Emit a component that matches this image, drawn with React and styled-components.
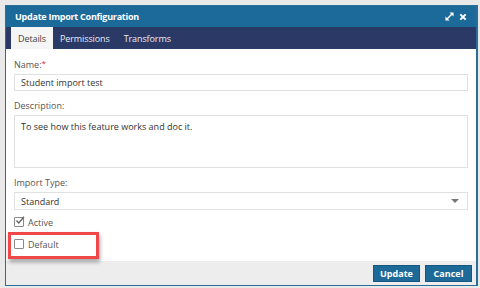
import React from 'react'
import styled, { createGlobalStyle } from 'styled-components'

const GlobalStyle = createGlobalStyle`
  html, body {
    margin: 0;
    padding: 0;
    background: #e9e9e9;
    font-family: 'Open Sans', 'Noto Sans', sans-serif;
  }
`

const Page = styled.div`
  width: 480px;
  height: 288px;
  box-sizing: border-box;
  padding: 5px 2px 2px 5px;
`

const Dialog = styled.section`
  height: 100%;
  box-sizing: border-box;
  border: 1px solid #2a6d99;
  border-right-width: 2px;
  display: flex;
  flex-direction: column;
  background: #fff;
`

const TitleBar = styled.header`
  height: 21px;
  background: #1c6a9a;
  color: #fff;
  display: flex;
  align-items: center;
  justify-content: space-between;
  padding: 0 9px 0 9px;
  font-size: 9px;
  font-weight: 700;
  letter-spacing: -0.25px;
`

const TitleIcons = styled.div`
  display: flex;
  gap: 5px;
  align-items: center;
`

const TabBar = styled.nav`
  height: 22px;
  background: #2b3966;
  display: flex;
  padding-left: 5px;
`

const Tab = styled.div`
  display: flex;
  align-items: center;
  padding: 0 7px;
  font-size: 9px;
  letter-spacing: -0.1px;
  color: ${p => (p.$active ? '#444' : '#e8ecf5')};
  background: ${p => (p.$active ? '#f5f5f5' : 'transparent')};
`

const Body = styled.div`
  flex: 1;
  padding: 1px 8px 0 8px;
  display: flex;
  flex-direction: column;
  position: relative;
`

const Label = styled.div`
  font-size: 9px;
  color: #555;
  margin: 8px 0 2px;
  line-height: 14px;
`

const Req = styled.sup`
  color: #e0201c;
  font-size: 8px;
  vertical-align: top;
  line-height: 10px;
`

const Field = styled.div`
  border: 1px solid #e0e0e0;
  height: ${p => p.$h || 17}px;
  box-sizing: border-box;
  padding: ${p => (p.$multi ? '4px 6px' : '0 6px')};
  display: flex;
  align-items: ${p => (p.$multi ? 'flex-start' : 'center')};
  justify-content: space-between;
  font-size: 9px;
  color: #333;
`

const Caret = styled.span`
  width: 0;
  height: 0;
  border-left: 4px solid transparent;
  border-right: 4px solid transparent;
  border-top: 4px solid #777;
  margin-right: 2px;
`

const CheckRow = styled.label`
  display: flex;
  align-items: center;
  gap: 4px;
  font-size: 9px;
  color: #555;
  height: 14px;
  margin-top: ${p => p.$mt || 0}px;
`

const Box = styled.span`
  width: 8px;
  height: 8px;
  border: 1px solid #8a8a8a;
  border-radius: 1px;
  position: relative;
  background: #fff;
`

const Highlight = styled.div`
  position: absolute;
  left: 2px;
  top: 183px;
  width: 91px;
  height: 27px;
  box-sizing: border-box;
  border: 3px solid #f04848;
  box-shadow: 1px 3px 4px rgba(0, 0, 0, 0.35);
`

const Footer = styled.footer`
  height: 24px;
  background: #ededed;
  display: flex;
  justify-content: flex-end;
  align-items: center;
  gap: 5px;
  padding-right: 4px;
`

const Button = styled.button`
  height: 17px;
  min-width: 47px;
  padding: 0;
  border: 1px solid #14567f;
  background: #1d6a99;
  color: #fff;
  font-family: inherit;
  font-size: 9px;
  font-weight: 700;
  cursor: pointer;
`

const ExpandIcon = () => (
  <svg width="9" height="9" viewBox="0 0 10 10">
    <path d="M1.5 8.5 L8.5 1.5" stroke="#fff" strokeWidth="1.5" />
    <path d="M5 0.5 H9.5 V5 Z" fill="#fff" />
    <path d="M0.5 5 V9.5 H5 Z" fill="#fff" />
  </svg>
)

const CloseIcon = () => (
  <svg width="8" height="8" viewBox="0 0 9 9">
    <path d="M1.5 1.5 L7.5 7.5 M7.5 1.5 L1.5 7.5" stroke="#fff" strokeWidth="2.2" />
  </svg>
)

const CheckMark = () => (
  <svg
    width="10"
    height="9"
    viewBox="0 0 10 9"
    style={{ position: 'absolute', left: 0, top: -2 }}
  >
    <path d="M1.5 4.5 L3.8 7 L9 0.8" stroke="#666" strokeWidth="1.4" fill="none" />
  </svg>
)

export default function App() {
  return (
    <Page>
      <GlobalStyle />
      <Dialog>
        <TitleBar>
          <span>Update Import Configuration</span>
          <TitleIcons>
            <ExpandIcon />
            <CloseIcon />
          </TitleIcons>
        </TitleBar>
        <TabBar>
          <Tab $active>Details</Tab>
          <Tab>Permissions</Tab>
          <Tab>Transforms</Tab>
        </TabBar>
        <Body>
          <Label>
            Name:<Req>*</Req>
          </Label>
          <Field>Student import test</Field>
          <Label>Description:</Label>
          <Field $multi $h={53}>
            To see how this feature works and doc it.
          </Field>
          <Label>Import Type:</Label>
          <Field $h={18}>
            Standard
            <Caret />
          </Field>
          <CheckRow $mt={5}>
            <Box>
              <CheckMark />
            </Box>
            Active
          </CheckRow>
          <CheckRow $mt={8}>
            <Box />
            Default
          </CheckRow>
          <Highlight />
        </Body>
        <Footer>
          <Button>Update</Button>
          <Button>Cancel</Button>
        </Footer>
      </Dialog>
    </Page>
  )
}
